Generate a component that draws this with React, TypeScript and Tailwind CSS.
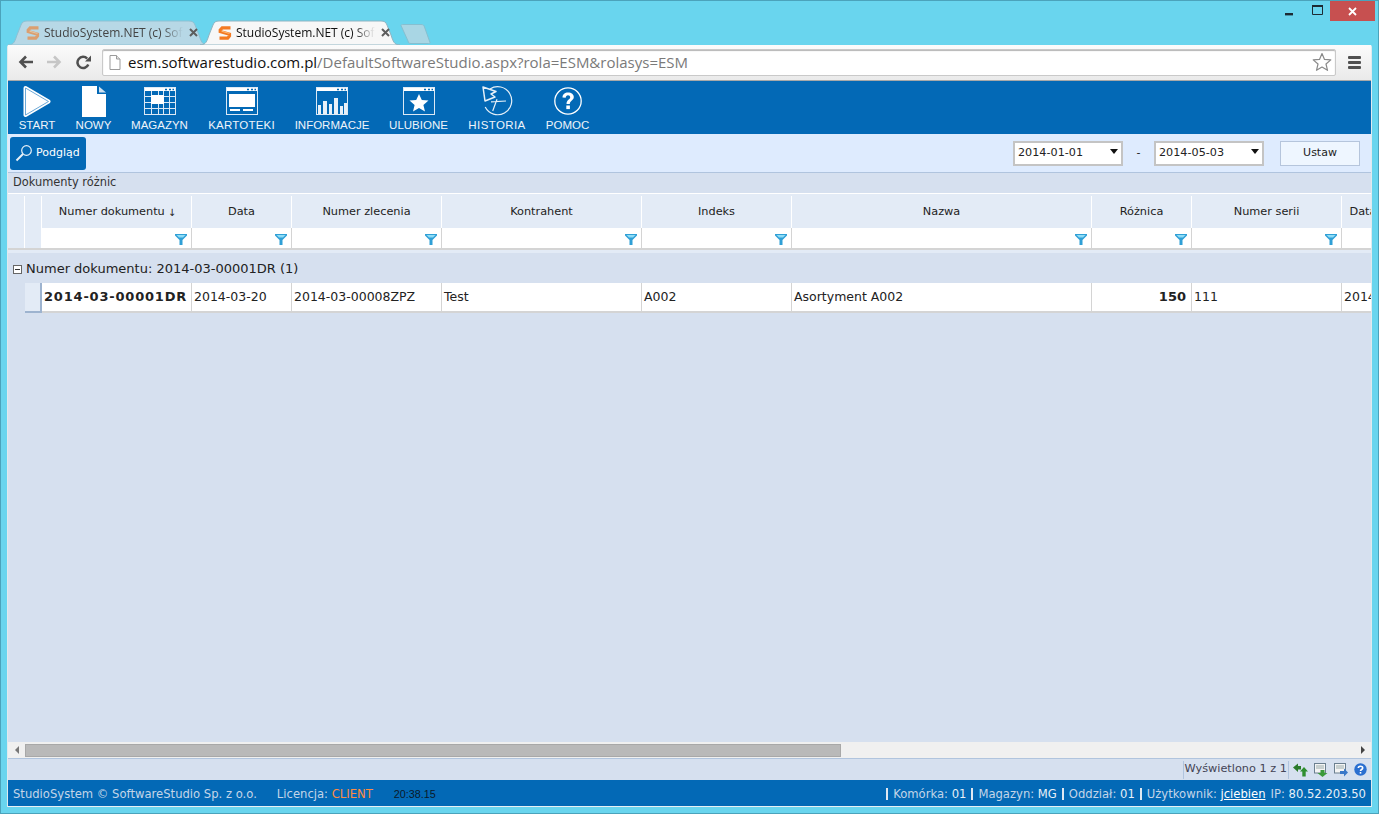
const blue = "bg-[#0369b6]";

const columns = [
  { title: "Numer dokumentu", width: "w-[150px]" },
  { title: "Data", width: "w-[100px]" },
  { title: "Numer zlecenia", width: "w-[150px]" },
  { title: "Kontrahent", width: "w-[200px]" },
  { title: "Indeks", width: "w-[150px]" },
  { title: "Nazwa", width: "w-[300px]" },
  { title: "Różnica", width: "w-[100px]" },
  { title: "Numer serii", width: "w-[150px]" },
  { title: "Data", width: "w-[43px]" },
];

const cells = ["2014-03-00001DR", "2014-03-20", "2014-03-00008ZPZ", "Test", "A002", "Asortyment A002", "150", "111", "2014-03-20"];

const Logo = ({ faded }: { faded?: boolean }) => (
  <svg width="14" height="16" viewBox="0 0 14 16" className={faded ? "opacity-60 shrink-0" : "shrink-0"}>
    <path d="M12.5 2.8 H4.2 L2.2 5 V6.6 L11.5 9.2 V11 L9.7 13.2 H1.5" fill="none" stroke="#f47a22" strokeWidth="3.2" />
    <path d="M3.5 5.6 L11.5 8 V9 L3.5 6.8 Z" fill="#fcb878" />
  </svg>
);

const Tab = ({ active }: { active?: boolean }) => (
  <div className={`relative flex h-[25px] w-[200px] items-center pl-[18px] ${active ? "z-10 -ml-[8px] text-[#111]" : "text-[#444]"}`}>
    <svg width="200" height="25" viewBox="0 0 200 25" className="absolute left-0 top-0">
      <path d="M0 25 C6 25 7 21 9 15 L13 5 C14 2 16 1 19 1 L181 1 C184 1 186 2 187 5 L191 15 C193 21 194 25 200 25 Z" fill={active ? "#f7f7f7" : "#b7d8e6"} stroke={active ? "#8fb4c2" : "#8fc0d2"} />
    </svg>
    <div className="relative flex items-center gap-[4px]">
      <Logo faded={!active} />
      <span className="w-[139px] overflow-hidden whitespace-nowrap font-['Open_Sans',sans-serif] text-[12px] [mask-image:linear-gradient(to_right,black_85%,transparent)]">StudioSystem.NET (c) SoftwareStudio</span>
      <svg width="9" height="9" viewBox="0 0 9 9" className="ml-[2px]">
        <path d="M1 1 L8 8 M8 1 L1 8" stroke="#5d5d5d" strokeWidth="2" />
      </svg>
    </div>
  </div>
);

const Funnel = () => (
  <svg width="12" height="11" viewBox="0 0 12 11">
    <path d="M0 0 H12 V1.5 L7.5 6 V11 H4.5 V6 L0 1.5 Z" fill="#2f9fd6" />
    <path d="M1.5 1 H10.5 L8 3.5 H4 Z" fill="#8fdcf5" />
  </svg>
);

const WindowFrame = ({ children }: { children?: React.ReactNode }) => (
  <svg width="32" height="28" viewBox="0 0 32 28" fill="none">
    <rect x="0.5" y="0.5" width="31" height="27" stroke="#dce9f5" />
    <rect x="1" y="1" width="30" height="3" fill="#fff" />
    <path d="M21 2.5 H23 M25 2.5 H27 M28.5 2.5 H30" stroke="#0369b6" strokeWidth="1.5" />
    {children}
  </svg>
);

const toolbar = [
  {
    label: "START",
    width: "w-[38px]",
    icon: (
      <svg width="28" height="33" viewBox="0 0 28 33" fill="none">
        <path d="M2.5 3 L25.5 16.5 L2.5 30 Z" fill="#fff" stroke="#fff" strokeWidth="4" strokeLinejoin="round" />
        <path d="M2.5 3 L25.5 16.5 L2.5 30 Z" stroke="#5d9fd3" strokeWidth="0.9" strokeLinejoin="round" />
      </svg>
    ),
  },
  {
    label: "NOWY",
    width: "w-[35px]",
    icon: (
      <svg width="24" height="31" viewBox="0 0 24 31">
        <path d="M0 0 H15 V8 H24 V31 H0 Z" fill="#fff" />
        <path d="M17 0.5 L24 6.5 H17 Z" fill="#cfe0ef" />
      </svg>
    ),
  },
  {
    label: "MAGAZYN",
    width: "w-[57px]",
    icon: (
      <WindowFrame>
        <path d="M1 9.5 H31 M1 15.5 H31 M1 21.5 H31 M7.5 4 V27 M14.5 4 V27 M19.5 4 V27 M25.5 4 V27" stroke="#dce9f5" />
        <rect x="7" y="8" width="13" height="9" fill="#fff" />
      </WindowFrame>
    ),
  },
  {
    label: "KARTOTEKI",
    width: "w-[67px] tracking-[0.2px]",
    icon: (
      <WindowFrame>
        <rect x="3" y="7" width="26" height="13" fill="#fff" />
        <rect x="4" y="22" width="10" height="2" fill="#fff" />
        <rect x="17" y="22" width="10" height="2" fill="#fff" />
      </WindowFrame>
    ),
  },
  {
    label: "INFORMACJE",
    width: "w-[74px]",
    icon: (
      <WindowFrame>
        <path d="M2 27 V18 H5 V27 Z M7 27 V14 H11 V27 Z M13 27 V17 H16 V27 Z M18 27 V11 H22 V27 Z M24 27 V19 H27 V27 Z M28 27 V16 H31 V27 Z" fill="#e8f0f8" />
      </WindowFrame>
    ),
  },
  {
    label: "ULUBIONE",
    width: "w-[59px]",
    icon: (
      <WindowFrame>
        <path d="M16 7 L18.8 13 L25.5 13.6 L20.4 18 L22 24.5 L16 21 L10 24.5 L11.6 18 L6.5 13.6 L13.2 13 Z" fill="#fff" />
      </WindowFrame>
    ),
  },
  {
    label: "HISTORIA",
    width: "w-[58px] tracking-[0.4px]",
    icon: (
      <svg width="31" height="31" viewBox="0 0 31 31" fill="none" stroke="#e6f0f8" strokeWidth="1.2">
        <path d="M8 3 A14 14 0 1 1 3.2 21" />
        <path d="M1 1 L14 5.5 L9 8 L13 11 L3 15 Z" fill="#0369b6" strokeLinejoin="round" strokeWidth="1.5" />
        <path d="M9 15.8 L24 15 M15 13.3 L10.7 25" />
      </svg>
    ),
  },
  {
    label: "POMOC",
    width: "w-[43px]",
    icon: (
      <svg width="28" height="28" viewBox="0 0 28 28" fill="none">
        <circle cx="14" cy="14" r="13.2" stroke="#fff" strokeWidth="1.3" />
        <path d="M8.5 10.5 C8.5 7 11 5.5 14 5.5 C17.5 5.5 19.8 7.3 19.8 10 C19.8 13.5 15.8 13.5 15.8 17 H12.5 C12.5 12.8 16.2 12.5 16.2 10.3 C16.2 9 15.3 8.3 14 8.3 C12.6 8.3 11.8 9.2 11.7 10.8 Z" fill="#fff" />
        <rect x="12.3" y="18.5" width="3.6" height="3.6" fill="#fff" />
      </svg>
    ),
  },
];

const DateSelect = ({ value }: { value: string }) => (
  <div className="flex h-[25px] w-[110px] items-center justify-between border-2 border-[#c4c4c4] bg-white pl-[3px] pr-[3px]">
    <span className="text-[11.2px] text-[#222]">{value}</span>
    <span className="mb-[4px] h-0 w-0 border-x-[4px] border-t-[5px] border-x-transparent border-t-[#111]" />
  </div>
);

export default function App() {
  return (
    <div className="flex h-screen w-screen flex-col overflow-hidden border border-[#4ba3bb] bg-[#69d5ee] pb-[6px] pl-[6px] pr-[6px] font-['DejaVu_Sans',sans-serif] text-[#222]">
      {/* title bar */}
      <div className="flex h-[19px] justify-end">
        <div className="-mr-[3px] flex h-[20px] items-center">
          <svg width="10" height="10" viewBox="0 0 10 10" className="mr-[18px]">
            <rect x="1" y="7" width="8" height="2.4" fill="#1d2b33" />
          </svg>
          <svg width="11" height="10" viewBox="0 0 11 10" className="mb-[2px] mr-[7px] h-[10px] w-[11px]">
            <path d="M0.5 0.5 H10.5 V9.5 H0.5 Z" fill="none" stroke="#1d2b33" />
            <rect x="0" y="0" width="11" height="2" fill="#1d2b33" />
          </svg>
          <div className="flex h-[20px] w-[45px] items-center justify-center bg-[#c75050]">
            <svg width="9" height="9" viewBox="0 0 9 9">
              <path d="M1 1 L8 8 M8 1 L1 8" stroke="#fff" strokeWidth="1.8" />
            </svg>
          </div>
        </div>
      </div>

      {/* tabs */}
      <div className="flex h-[25px] pl-[1px]">
        <Tab />
        <Tab active />
        <svg width="32" height="22" viewBox="0 0 32 22" className="mt-[4px]">
          <path d="M1 1.5 C1 1 1.5 0.5 2.5 0.5 L21 0.5 C23 0.5 24 1 24.5 3 L30 18.5 C30 19.5 29.5 19.5 28.5 19.5 L11 19.5 C9 19.5 8.5 19 8 17 Z" fill="#a9d6e4" stroke="#86bfd0" />
        </svg>
      </div>

      {/* browser */}
      <div className="flex min-h-0 flex-1 flex-col rounded-t-[2px] border-x border-[#dfeaee] bg-[#d6e0ef]">
        <div className="flex h-[36px] shrink-0 items-center border-b border-[#a9a9a9] bg-gradient-to-b from-[#fbfbfb] to-[#eaeaea] pb-[1px] pl-[10px] pr-[10px]">
          <svg width="16" height="14" viewBox="0 0 16 14" className="mr-[12px]">
            <path d="M15 7 H4 M8 1.5 L2.5 7 L8 12.5" fill="none" stroke="#505050" strokeWidth="2.6" />
          </svg>
          <svg width="16" height="14" viewBox="0 0 16 14" className="mr-[14px]">
            <path d="M1 7 H12 M8 1.5 L13.5 7 L8 12.5" fill="none" stroke="#c6c6c6" strokeWidth="2.6" />
          </svg>
          <svg width="15" height="15" viewBox="0 0 15 15" className="mr-[11px]">
            <path d="M12.3 9.5 A5.6 5.6 0 1 1 11.2 3.6" fill="none" stroke="#505050" strokeWidth="2.5" />
            <path d="M9 6.5 H15 V0.5 Z" fill="#505050" />
          </svg>
          <div className="flex h-[27px] flex-1 items-center rounded-[2px] border border-[#c9c9c9] bg-white pl-[6px] pr-[2px] shadow-[inset_0_1px_1px_#b5b5b5]">
            <svg width="12" height="15" viewBox="0 0 12 15" className="mr-[7px]">
              <path d="M1 0.5 H7.5 L11 4 V14.5 H1 Z" fill="#fff" stroke="#9b9b9b" />
              <path d="M7.5 0.5 V4 H11" fill="#e4e4e4" stroke="#9b9b9b" />
            </svg>
            <span className="flex-1 whitespace-nowrap font-['Open_Sans',sans-serif] text-[15px] text-[#7a7a7a]">
              <span className="text-[#111]">esm.softwarestudio.com.pl</span>/DefaultSoftwareStudio.aspx?rola=ESM&amp;rolasys=ESM
            </span>
            <svg width="20" height="20" viewBox="0 0 20 20" className="mr-[1px]">
              <path d="M10 1.5 L12.5 7.4 L18.8 7.9 L14 12 L15.5 18.3 L10 15 L4.5 18.3 L6 12 L1.2 7.9 L7.5 7.4 Z" fill="#fff" stroke="#8a8a8a" strokeWidth="1.2" strokeLinejoin="round" />
            </svg>
          </div>
          <div className="ml-[12px] flex w-[13px] flex-col gap-[2px]">
            <div className="h-[3px] rounded-[1px] bg-[#505050]" />
            <div className="h-[3px] rounded-[1px] bg-[#505050]" />
            <div className="h-[3px] rounded-[1px] bg-[#505050]" />
          </div>
        </div>

        {/* app toolbar */}
        <div className={`flex h-[53px] shrink-0 gap-5 pl-[10px] ${blue}`}>
          {toolbar.map((item) => (
            <div key={item.label} className={`flex flex-col items-center ${item.width}`}>
              <div className="flex h-[38px] items-center pt-[2px]">{item.icon}</div>
              <span className="whitespace-nowrap font-['Liberation_Sans',sans-serif] text-[11.5px] leading-[13px] text-[#eef4fa]">{item.label}</span>
            </div>
          ))}
        </div>

        {/* actions */}
        <div className="flex h-[39px] shrink-0 items-center border-b border-[#b0c4de] bg-[#deebfe] pl-[2px] pr-[11px]">
          <div className={`flex h-[33px] w-[76px] items-center gap-[3px] rounded-[3px] pl-[5px] text-[11px] text-white ${blue}`}>
            <svg width="18" height="18" viewBox="0 0 18 18" fill="none">
              <circle cx="11.5" cy="6.5" r="4.8" stroke="#e8f1f8" strokeWidth="1.2" />
              <path d="M8 10 L1.5 16.5" stroke="#e8f1f8" strokeWidth="2" />
            </svg>
            Podgląd
          </div>
          <div className="ml-auto flex items-center">
            <DateSelect value="2014-01-01" />
            <span className="w-[31px] text-center text-[11px]">-</span>
            <DateSelect value="2014-05-03" />
            <div className="ml-4 flex h-[25px] w-[80px] items-center justify-center border border-[#b5c5dc] bg-[#eef6ff] text-[11px]">Ustaw</div>
          </div>
        </div>

        <div className="flex h-[20px] shrink-0 items-center pl-[5px] text-[11.4px] text-[#333]">Dokumenty różnic</div>

        {/* grid */}
        <div className="flex min-h-0 flex-1 flex-col overflow-hidden">
          <div className="flex h-[35px] shrink-0 border-t border-white bg-[#e3ebf6] pt-[2px]">
            <div className="w-[17px] shrink-0 border-r border-white" />
            <div className="w-[17px] shrink-0 border-r border-white" />
            {columns.map((col, i) => (
              <div key={i} className={`flex shrink-0 items-center justify-center whitespace-nowrap border-r border-white text-[11.3px] ${col.width} ${i === 0 ? "pl-[2px]" : ""}`}>
                {col.title}
                {i === 0 && <span className="ml-[3px] text-[10px]">↓</span>}
              </div>
            ))}
          </div>
          <div className="flex h-[22px] shrink-0 border-b-2 border-[#d4d4d4] bg-white">
            <div className="w-[17px] shrink-0 border-r border-white bg-[#e3ebf6]" />
            <div className="w-[17px] shrink-0 border-r border-white bg-[#e3ebf6]" />
            {columns.map((col, i) => (
              <div key={i} className={`flex shrink-0 items-center justify-end border-r border-[#d4d4d4] pr-[4px] pt-[2px] ${col.width}`}>
                {i < 8 && <Funnel />}
              </div>
            ))}
          </div>
          <div className="h-[3px] shrink-0 bg-[#e3ebf6]" />
          <div className="flex h-[30px] shrink-0 items-center pl-[5px] pt-[2px] text-[13px]">
            <span className="mr-[4px] flex h-[9px] w-[9px] items-center justify-center border border-[#666] bg-white">
              <span className="h-px w-[5px] bg-[#333]" />
            </span>
            Numer dokumentu: 2014-03-00001DR (1)
          </div>
          <div className="flex h-[30px] shrink-0 pl-[17px] text-[12.5px]">
            <div className="w-[17px] shrink-0 border-b-2 border-r-2 border-[#9db3cf] bg-[#e3ebf6]" />
            {columns.map((col, i) => (
              <div
                key={i}
                className={`flex shrink-0 items-center overflow-hidden whitespace-nowrap border-b-2 border-r border-[#d4d4d4] bg-white px-[2px] ${col.width} ${i === 0 ? "text-[13px] font-bold tracking-[0.8px]" : ""} ${i === 6 ? "justify-end pr-[5px] text-[13px] font-bold" : ""}`}
              >
                {cells[i]}
              </div>
            ))}
          </div>
          <div className="flex-1" />
        </div>

        {/* horizontal scrollbar */}
        <div className="flex h-[17px] shrink-0 items-center border-b border-[#b0c4de] bg-[#f0f0f0]">
          <div className="flex w-[17px] justify-center">
            <span className="h-0 w-0 border-y-[4px] border-r-[4px] border-y-transparent border-r-[#777]" />
          </div>
          <div className="h-[13px] w-[816px] border border-[#a8a8a8] bg-[#b9b9b9]" />
          <div className="ml-auto flex w-[17px] justify-center">
            <span className="h-0 w-0 border-y-[4px] border-l-[4px] border-y-transparent border-l-[#444]" />
          </div>
        </div>

        {/* pager */}
        <div className="flex h-[21px] shrink-0 items-center justify-end pr-[4px] text-[11.3px] text-[#445]">
          <div className="flex h-[18px] items-center whitespace-nowrap border-x border-[#b0c4de] px-[1px]">Wyświetlono 1 z 1</div>
          <div className="ml-[4px] flex items-center gap-[6px]">
            <svg width="15" height="14" viewBox="0 0 15 14">
              <path d="M0 4.5 L5 0.5 V3 H8 V6.5 H5 V9 Z" fill="#2a7a2a" />
              <path d="M11 4 L15 8.5 H12.7 V13.5 H9.3 V8.5 H7 Z" fill="#2f8f2f" />
            </svg>
            <svg width="14" height="14" viewBox="0 0 14 14">
              <rect x="0.5" y="0.5" width="11" height="9.5" fill="#f4f4f4" stroke="#6b7f8f" />
              <path d="M2 3 H10 M2 5 H10" stroke="#9aa" />
              <path d="M6.5 7 H10.5 V10 H13.5 L8.5 14 L3.5 10 H6.5 Z" fill="#3a9a3a" />
            </svg>
            <svg width="14" height="14" viewBox="0 0 14 14">
              <rect x="0.5" y="0.5" width="11" height="9.5" fill="#f4f4f4" stroke="#6b7f8f" />
              <path d="M2 3 H10 M2 5 H10" stroke="#9aa" />
              <path d="M6 8 H10 V5.5 L14 9.5 L10 13.5 V11 H6 Z" fill="#3a78c8" />
            </svg>
            <svg width="13" height="13" viewBox="0 0 13 13">
              <circle cx="6.5" cy="6.5" r="6.2" fill="#2a6fd0" />
              <path d="M4.3 5 C4.3 2.8 8.7 2.6 8.7 5 C8.7 6.6 6.5 6.3 6.5 8" fill="none" stroke="#fff" strokeWidth="1.6" />
              <rect x="5.7" y="9" width="1.6" height="1.6" fill="#fff" />
            </svg>
          </div>
        </div>

        {/* footer */}
        <div className={`flex h-[27px] shrink-0 items-center border-b border-[#e8f0f4] pl-[5px] pr-[5px] pt-[3px] text-[11.6px] text-[#c3d5e8] ${blue}`}>
          <span className="whitespace-nowrap">StudioSystem © SoftwareStudio Sp. z o.o.</span>
          <span className="ml-5 whitespace-nowrap">Licencja: <span className="text-[#ff8c42]">CLIENT</span></span>
          <span className="ml-[21px] font-['Liberation_Sans',sans-serif] text-[10.8px] text-[#0a1a2a]">20:38.15</span>
          <div className="ml-auto flex items-center whitespace-nowrap">
            <span className="mr-[5px] h-[12px] border-l-2 border-[#dfe8f2]" />
            <span>Komórka: <span className="text-[#e8f0f8]">01</span></span>
            <span className="mx-[5px] h-[12px] border-l-2 border-[#dfe8f2]" />
            <span>Magazyn: <span className="text-[#e8f0f8]">MG</span></span>
            <span className="mx-[5px] h-[12px] border-l-2 border-[#dfe8f2]" />
            <span>Oddział: <span className="text-[#e8f0f8]">01</span></span>
            <span className="mx-[5px] h-[12px] border-l-2 border-[#dfe8f2]" />
            <span>Użytkownik: <span className="text-white underline">jciebien</span></span>
            <span className="ml-[5px]">IP: <span className="text-[#e8f0f8]">80.52.203.50</span></span>
          </div>
        </div>
      </div>
    </div>
  );
}
